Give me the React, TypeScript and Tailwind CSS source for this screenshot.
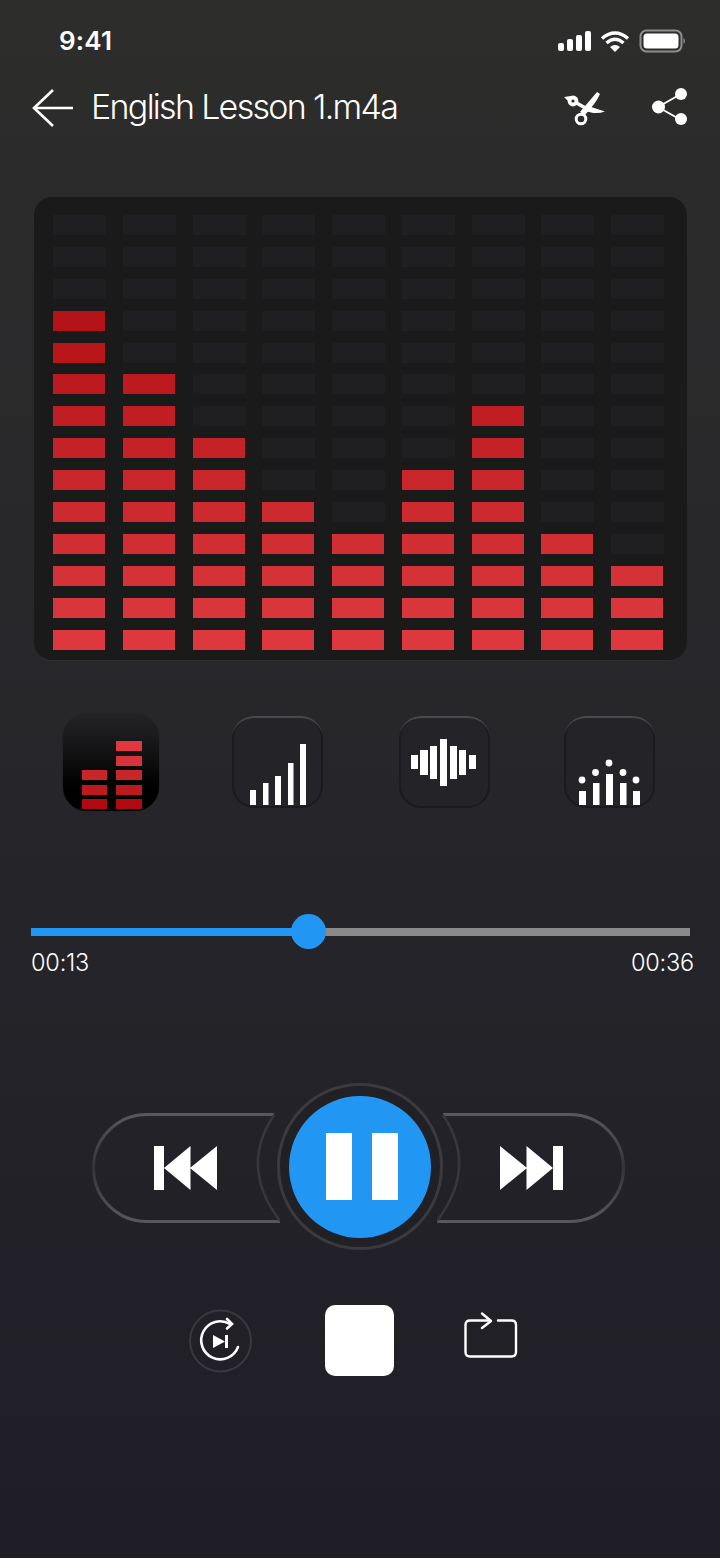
import React from 'react';

const COL_LEVELS = [11, 9, 7, 5, 4, 6, 8, 4, 3];
const ROWS = 14;

// red gets brighter towards the bottom row
const RED_ROWS = [
  '#a8080e', '#ae0a10', '#b41015', '#b41318', '#b81619', '#bc1a1f', '#c01e23',
  '#c42226', '#c8262b', '#cc2a2f', '#d02e33', '#d43237', '#d8363a', '#dc383d',
];

const Equalizer = () => (
  <div className="mx-[34px] mt-[70px] h-[464px] w-[653px] rounded-[18px] border-b border-b-[#2e2e2f] bg-[#1a1a1a] pl-[19px] pt-[18px]">
    <div className="grid grid-cols-[repeat(9,52px)] gap-x-[17.75px] gap-y-[11.9px]">
      {Array.from({ length: ROWS }).map((_, row) =>
        COL_LEVELS.map((level, col) => {
          const lit = row >= ROWS - level;
          return (
            <div
              key={`${row}-${col}`}
              className={lit ? 'h-[20px] w-[52px]' : 'h-[20px] w-[53px] bg-[#1f1f21]'}
              style={lit ? { backgroundColor: RED_ROWS[row] } : undefined}
            />
          );
        }),
      )}
    </div>
  </div>
);

const StatusIcons = () => (
  <svg width="128" height="24" viewBox="0 0 128 24" fill="none">
    {/* x origin 557, y origin 31 */}
    <rect x="1" y="14" width="6" height="8" rx="2" fill="#fff" />
    <rect x="10" y="10" width="6" height="12" rx="2" fill="#fff" />
    <rect x="19" y="6" width="6" height="16" rx="2" fill="#fff" />
    <rect x="28" y="2" width="6" height="20" rx="2" fill="#fff" />
    <path d="M45 9.5 Q58 -1.5 71 9.5" stroke="#fff" strokeWidth="3.4" />
    <path d="M49.5 14 Q58 6.5 66.5 14" stroke="#fff" strokeWidth="3.4" />
    <path d="M53 18 Q58 14 63 18 L58 23 Z" fill="#fff" />
    <rect x="83.5" y="1.5" width="41" height="21" rx="6" stroke="#8e8e8e" strokeWidth="2" />
    <rect x="86.5" y="4.5" width="35" height="15" rx="3.5" fill="#fff" />
    <path d="M126.5 9 Q128 10 128 12 Q128 14 126.5 15 Z" fill="#8e8e8e" />
  </svg>
);

const Header = () => (
  <div className="mt-[31px] flex h-[40px] items-center pl-[31px]">
    <svg width="44" height="40" viewBox="0 0 44 40" fill="none" stroke="#fff" strokeWidth="2.6">
      <path d="M42 21 H3" />
      <path d="M22 3 L3 21 L22 39" />
    </svg>
    <span className="ml-[16px] font-['Inter',sans-serif] text-[34px] font-light leading-[40px] tracking-[-1.7px] text-white">
      English Lesson 1.m4a
    </span>
    <svg className="ml-auto" width="50" height="40" viewBox="0 0 50 40" fill="none">
      {/* scissors */}
      <path d="M36 5 L39 7 Q35 16 24 28 L19 25 Z" fill="#fff" />
      <circle cx="20" cy="32" r="4.8" stroke="#fff" strokeWidth="3" />
      <path d="M12 14 L28 23" stroke="#fff" strokeWidth="3.4" />
      <path d="M27 19 L44 24.5 Q37 27 30 25.5 L25 24 Z" fill="#fff" />
      <path d="M3 10 L10 9 L10 17 Z" fill="#fff" />
      <circle cx="12" cy="14" r="5.4" fill="#fff" />
      <circle cx="12" cy="14" r="1.6" fill="#2d2d2d" />
    </svg>
    <svg className="ml-[41px] mr-[30px]" width="38" height="40" viewBox="0 0 38 40" fill="#fff">
      <path d="M6 20 L29 7 M6 20 L29 33" stroke="#fff" strokeWidth="2" />
      <circle cx="29" cy="7" r="6" />
      <circle cx="6.5" cy="20" r="6.5" />
      <circle cx="29" cy="32" r="6" />
    </svg>
  </div>
);

const StyleButton = ({ className, children }: { className: string; children: React.ReactNode }) => (
  <div
    className={`mt-[2px] h-[92px] w-[91px] rounded-[22px] bg-[#242327] shadow-[inset_0_3px_1px_-1px_#4c4c50,inset_0_0_0_2px_#1b1b1d] ${className}`}
  >
    <svg width="92" height="92" viewBox="0 0 92 92" fill="#fff">
      {children}
    </svg>
  </div>
);

const StyleTabs = () => {
  const leftRows = [2, 3, 4];
  const rightRows = [0, 1, 2, 3, 4];
  const activeColors = ['#e0383e', '#d8323a', '#c8262b', '#bc1a1f', '#b00a10'];
  return (
    <div className="mt-[53px] flex items-start pl-[63px]">
      <div className="flex h-[97px] w-[96px] items-end justify-center gap-[9px] rounded-[24px] bg-gradient-to-b from-[#242326] via-[#0e0e0f] via-50% to-black pb-[2px] pl-px shadow-[0_0_1px_#111]">
        <div className="flex flex-col gap-[4.4px]">
          {leftRows.map((i) => (
            <div key={i} className="h-[10px] w-[25px]" style={{ backgroundColor: activeColors[i] }} />
          ))}
        </div>
        <div className="flex flex-col gap-[4.4px]">
          {rightRows.map((i) => (
            <div key={i} className="h-[10px] w-[26px]" style={{ backgroundColor: activeColors[i] }} />
          ))}
        </div>
      </div>
      <StyleButton className="ml-[73px]">
        <rect x="18" y="74" width="6" height="15" />
        <rect x="31" y="67" width="5.5" height="22" />
        <rect x="43" y="60" width="6" height="29" />
        <rect x="56" y="47" width="5.5" height="42" />
        <rect x="68" y="28" width="6" height="61" />
      </StyleButton>
      <StyleButton className="ml-[76px]">
        <rect x="12" y="39" width="7" height="14" />
        <rect x="21" y="34" width="8" height="25" />
        <rect x="31" y="30" width="7" height="33" />
        <rect x="41" y="23" width="7" height="47" />
        <rect x="51" y="30" width="7" height="33" />
        <rect x="60" y="34" width="7" height="25" />
        <rect x="70" y="39" width="7" height="14" />
      </StyleButton>
      <StyleButton className="ml-[74px]">
        <rect x="15" y="75" width="7" height="14" />
        <rect x="29" y="67" width="6.5" height="22" />
        <rect x="42" y="58" width="7" height="31" />
        <rect x="56" y="67" width="6.5" height="22" />
        <rect x="69" y="75" width="7" height="14" />
        <circle cx="18" cy="64" r="3.4" />
        <circle cx="31.5" cy="56.5" r="3.4" />
        <circle cx="45" cy="47" r="3.4" />
        <circle cx="59" cy="56.5" r="3.4" />
        <circle cx="72" cy="64" r="3.4" />
      </StyleButton>
    </div>
  );
};

const Progress = () => (
  <div className="mt-[103px] pl-[31px] pr-[30px]">
    <div className="relative flex h-[35px] items-center">
      <div className="h-[8px] w-[260px] bg-[#2196f3]" />
      <div className="h-[8px] flex-1 bg-[#8a8a8a]" />
      <div className="absolute left-[260px] top-0 h-[35px] w-[35px] rounded-full bg-[#2196f3]" />
    </div>
    <div className="-mr-[4px] mt-px flex justify-between font-['Inter',sans-serif] text-[23.5px] font-light leading-[26px] tracking-[-0.2px] text-white">
      <span>00:13</span>
      <span>00:36</span>
    </div>
  </div>
);

const SkipPill = ({ flip }: { flip?: boolean }) => (
  <svg
    className={flip ? 'mt-[2px] self-center -scale-x-100' : 'mt-[2px] self-center'}
    width="188"
    height="112"
    viewBox="0 0 188 112"
    fill="none"
  >
    <defs>
      <linearGradient id="pillStroke" x1="0" y1="0" x2="0" y2="1">
        <stop offset="0" stopColor="#58585c" />
        <stop offset="0.5" stopColor="#343438" />
        <stop offset="1" stopColor="#58585c" />
      </linearGradient>
    </defs>
    <path className="blur-[0.5px]" d="M182 2.5 H55 A53.5 53.5 0 0 0 55 109.5 H188" stroke="url(#pillStroke)" strokeWidth="3" />
    <path className="blur-[0.5px]" d="M182 3 Q147 55 188 109" stroke="#38383c" strokeWidth="2.5" />
    <rect x="62" y="34" width="10" height="44" fill="#fff" />
    <path d="M72 56 L98.5 34 V78 Z M98 56 L125 34 V78 Z" fill="#fff" />
  </svg>
);

const Transport = () => (
  <div className="mt-[107px] flex h-[167px] pl-[92px]">
    <SkipPill />
    <div className="-ml-[3px] flex h-[167px] w-[166px] shrink-0 items-center justify-center rounded-full border-[3px] border-[#3a3a3f] bg-[#212025]">
      <div className="flex h-[142px] w-[142px] items-center justify-center gap-[20px] rounded-full bg-[#2196f3] pl-[4px]">
        <div className="h-[67px] w-[26px] bg-white" />
        <div className="h-[67px] w-[26px] bg-white" />
      </div>
    </div>
    <div className="-ml-[6px] flex h-[167px]">
      <SkipPill flip />
    </div>
  </div>
);

const BottomControls = () => (
  <div className="mt-[55px] flex h-[71px] items-center pl-[189px]">
    <svg width="64" height="64" viewBox="0 0 64 64" fill="none" stroke="#fff" strokeLinecap="round">
      <circle cx="31.5" cy="32" r="30.5" stroke="#38383d" strokeWidth="2" />
      <path d="M49 38 A19 19 0 1 1 41 15" strokeWidth="2.6" />
      <path d="M38 10 L43 15 L38 19.5" strokeWidth="2.6" />
      <path d="M24 26 L36 32.5 L24 39 Z" fill="#fff" stroke="none" />
      <rect x="36" y="26" width="3" height="13" fill="#fff" stroke="none" />
    </svg>
    <div className="ml-[72px] h-[71px] w-[69px] rounded-[10px] bg-white" />
    <svg
      className="mb-[11px] ml-[70px]"
      width="54"
      height="46"
      viewBox="0 0 54 46"
      fill="none"
      stroke="#fff"
      strokeWidth="2.4"
      strokeLinecap="round"
      strokeLinejoin="round"
    >
      <path d="M26 8.5 H6 Q1.5 8.5 1.5 13 V40 Q1.5 44.5 6 44.5 H47.5 Q52 44.5 52 40 V13 Q52 8.5 47.5 8.5 H34" />
      <path d="M18 1.5 L27 9 L18 16" />
    </svg>
  </div>
);

export default function App() {
  return (
    <div className="flex h-[1558px] w-[720px] flex-col overflow-hidden bg-gradient-to-b from-[#2d2d2c] via-[#252429] via-60% to-[#1f1e27]">
      <div className="mt-[26px] flex h-[30px] items-center justify-between pl-[59px] pr-[35px]">
        <span className="font-['Inter',sans-serif] text-[26px] font-semibold leading-[30px] tracking-[0.2px] text-white">9:41</span>
        <StatusIcons />
      </div>
      <Header />
      <Equalizer />
      <StyleTabs />
      <Progress />
      <Transport />
      <BottomControls />
    </div>
  );
}
